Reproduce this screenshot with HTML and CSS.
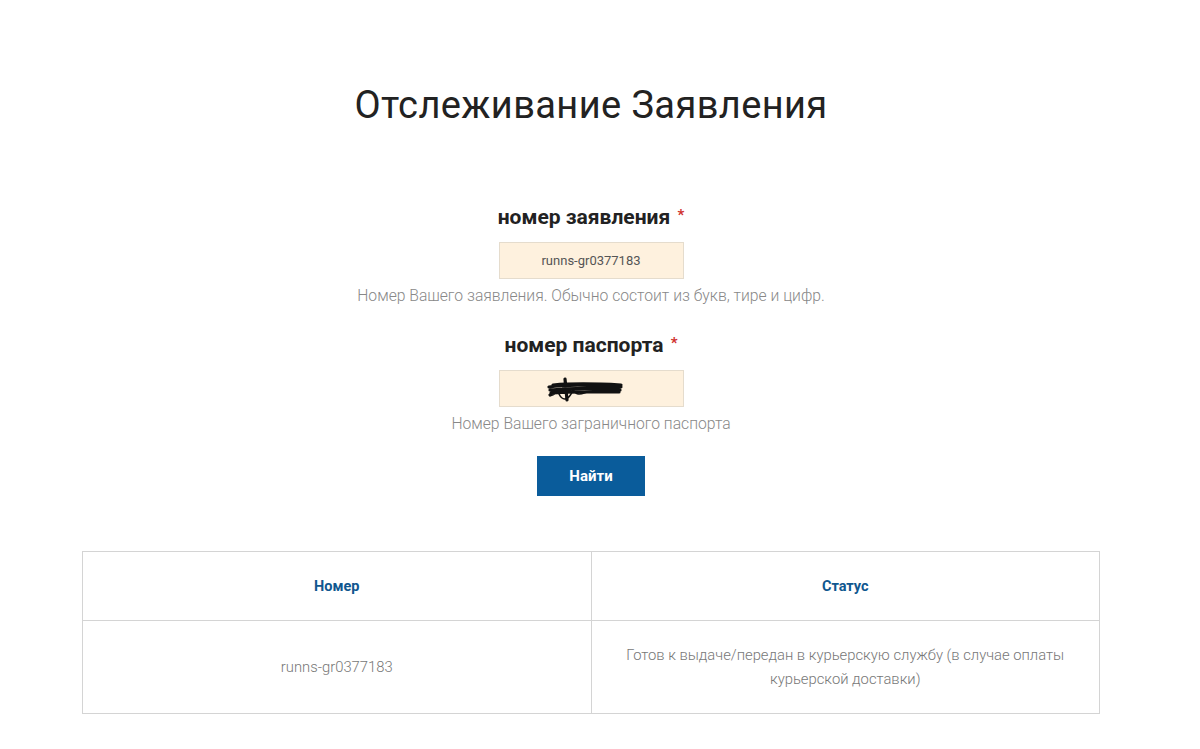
FILE: index.html
```
<!DOCTYPE html>
<html lang="ru">
<head>
    <meta charset="UTF-8">
    <meta name="viewport" content="width=device-width, initial-scale=1.0">
    <title>Отслеживание Заявления</title>
    <link rel="stylesheet" href="styles.css">
</head>
<body>
    <div class="page">
        <h1 class="title">Отслеживание Заявления</h1>

        <!-- Search form -->
        <form class="track-form" onsubmit="return false;">
            <div class="field">
                <label class="field-label" for="appNumber">номер заявления <span class="req">*</span></label>
                <input class="field-input" type="text" id="appNumber" value="runns-gr0377183">
                <div class="field-help">Номер Вашего заявления. Обычно состоит из букв, тире и цифр.</div>
            </div>

            <div class="field">
                <label class="field-label" for="passport">номер паспорта <span class="req">*</span></label>
                <div class="field-input masked">
                    <svg class="scribble" width="76" height="26" viewBox="0 0 76 26">
                        <path d="M2 11 C20 8 45 9 74 11 M3 14 C25 12 50 12 73 14 M4 17 C22 15 48 16 72 16 M6 9 C30 7 55 8 74 9 M18 3 L20 24 M3 19 C8 17 12 15 16 13" stroke="#111" stroke-width="3.2" fill="none" stroke-linecap="round"/>
                        <path d="M12 18 C16 26 22 24 26 14 C30 20 34 18 40 16" stroke="#111" stroke-width="1.6" fill="none" stroke-linecap="round"/>
                    </svg>
                </div>
                <div class="field-help">Номер Вашего заграничного паспорта</div>
            </div>

            <button class="btn-find" type="submit">Найти</button>
        </form>

        <!-- Result table -->
        <table class="result">
            <thead>
                <tr>
                    <th>Номер</th>
                    <th>Статус</th>
                </tr>
            </thead>
            <tbody>
                <tr>
                    <td>runns-gr0377183</td>
                    <td>Готов к выдаче/передан в курьерскую службу (в случае оплаты курьерской доставки)</td>
                </tr>
            </tbody>
        </table>
    </div>
</body>
</html>
```

FILE: styles.css
```
/* General */
body {
    margin: 0;
    padding-right: 18px;
    font-family: Roboto, "Liberation Sans", Arial, sans-serif;
    background: #ffffff;
    color: #222222;
}

.page {
    width: 1018px;
    margin: 0 auto;
    padding-top: 80px;
}

.title {
    margin: 0;
    text-align: center;
    font-size: 38px;
    font-weight: 400;
    line-height: 50px;
    letter-spacing: 0.4px;
    color: #222222;
}

/* Form */
.track-form {
    display: flex;
    flex-direction: column;
    align-items: center;
    margin-top: 70px;
}

.field {
    display: flex;
    flex-direction: column;
    align-items: center;
    margin-bottom: 23px;
}

.field-label {
    font-size: 21px;
    font-weight: 700;
    line-height: 30px;
    color: #222222;
    margin-bottom: 10px;
}

.req {
    color: #d0312d;
    font-size: 15px;
    vertical-align: 4px;
    margin-left: 2px;
}

.field-input {
    box-sizing: border-box;
    width: 185px;
    height: 37px;
    background: #fef1de;
    border: 1px solid #e5dccd;
    font-family: inherit;
    font-size: 13px;
    font-weight: 400;
    color: #555555;
    text-align: center;
    padding: 0;
    outline: none;
}

.masked {
    display: flex;
    align-items: center;
    justify-content: center;
}

.scribble {
    margin-left: -12px;
}

.field-help {
    margin-top: 8px;
    font-size: 15.7px;
    font-weight: 300;
    line-height: 18px;
    color: #888888;
}

.btn-find {
    width: 108px;
    height: 40px;
    border: none;
    background: #0a5c9b;
    color: #ffffff;
    font-family: inherit;
    font-size: 15px;
    font-weight: 700;
    cursor: pointer;
}

/* Result table */
.result {
    width: 100%;
    margin-top: 55px;
    border-collapse: collapse;
    table-layout: fixed;
}

.result th,
.result td {
    border: 1px solid #d4d4d4;
    text-align: center;
    padding: 0 34px;
}

.result th {
    height: 68px;
    font-size: 14.5px;
    font-weight: 700;
    color: #10578f;
}

.result td {
    height: 92px;
    font-size: 14.8px;
    font-weight: 300;
    line-height: 24px;
    color: #777777;
}
```
